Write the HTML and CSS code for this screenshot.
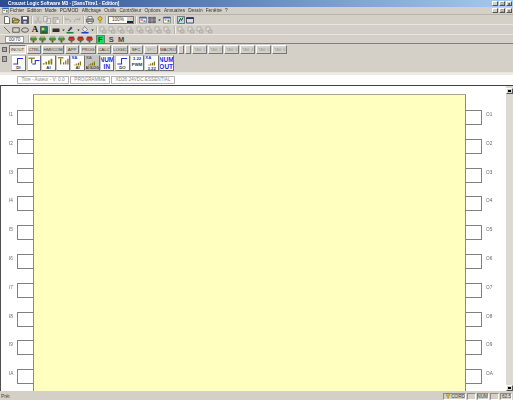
FILE: index.html
```html
<!DOCTYPE html>
<html lang="fr">
<head>
    <meta charset="UTF-8">
    <title>Crouzet Logic Software M3</title>
    <link rel="stylesheet" href="styles.css">
</head>
<body>
    <svg class="defs" width="0" height="0">
        <symbol id="i-new" viewBox="0 0 16 16"><path d="M3 1h7l3 3v11H3z" fill="#fff" stroke="#333" stroke-width="1.4"/></symbol>
        <symbol id="i-open" viewBox="0 0 16 16"><path d="M1 14V4h5l1 2h5v2" fill="#e8d060" stroke="#333" stroke-width="1.3"/><path d="M1 14l3-6h11l-3 6z" fill="#d8b840" stroke="#333" stroke-width="1.3"/></symbol>
        <symbol id="i-save" viewBox="0 0 16 16"><path d="M1 1h14v14H1z" fill="#505070" stroke="#222"/><path d="M4 2h8v5H4z" fill="#fff"/><path d="M5 10h6v5H5z" fill="#ccc"/></symbol>
        <symbol id="i-cut" viewBox="0 0 16 16"><path d="M5 1l5 9M11 1l-5 9" stroke="#a8a8a8" stroke-width="1.5" fill="none"/><circle cx="4" cy="12" r="2.4" fill="none" stroke="#a8a8a8" stroke-width="1.5"/><circle cx="12" cy="12" r="2.4" fill="none" stroke="#a8a8a8" stroke-width="1.5"/></symbol>
        <symbol id="i-copy" viewBox="0 0 16 16"><path d="M1 1h8v10H1zM7 5h8v10H7z" fill="#e4e2dc" stroke="#a0a0a0" stroke-width="1.4"/></symbol>
        <symbol id="i-paste" viewBox="0 0 16 16"><path d="M2 3h10v12H2z" fill="#c8c4b0" stroke="#a0a0a0" stroke-width="1.4"/><path d="M8 7h7v8H8z" fill="#eee" stroke="#a0a0a0"/></symbol>
        <symbol id="i-undo" viewBox="0 0 16 16"><path d="M13 12C13 6 8 5 4 7M2 3l1 5 5-1" fill="none" stroke="#a8a8a8" stroke-width="1.8"/></symbol>
        <symbol id="i-redo" viewBox="0 0 16 16"><path d="M3 12C3 6 8 5 12 7M14 3l-1 5-5-1" fill="none" stroke="#a8a8a8" stroke-width="1.8"/></symbol>
        <symbol id="i-print" viewBox="0 0 16 16"><path d="M4 1h8v5H4z" fill="#fff" stroke="#333"/><path d="M1 6h14v6H1z" fill="#a0a0a0" stroke="#333"/><path d="M4 11h8v4H4z" fill="#fff" stroke="#333"/></symbol>
        <symbol id="i-key" viewBox="0 0 16 16"><circle cx="8" cy="5" r="4" fill="#e8c820" stroke="#605010"/><path d="M7 8h2v7H7z" fill="#a89018"/><path d="M9 11h2v2H9z" fill="#a89018"/></symbol>
        <symbol id="i-win" viewBox="0 0 16 16"><path d="M1 2h14v12H1z" fill="#fff" stroke="#445"/><path d="M1 2h14v3H1z" fill="#3060b0"/><path d="M3 7h4v2H3z" fill="#d04030"/><path d="M9 7h4v5H9z" fill="#40a060"/></symbol>
        <symbol id="i-grid" viewBox="0 0 16 16"><path d="M1 2h6v5H1zM9 2h6v5H9zM1 9h6v5H1zM9 9h6v5H9z" fill="#707080" stroke="#333" stroke-width=".6"/></symbol>
        <symbol id="i-drop" viewBox="0 0 16 16"><path d="M4 6h8l-4 5z" fill="#222"/></symbol>
        <symbol id="i-map" viewBox="0 0 16 16"><path d="M1 2h14v12H1z" fill="#f4e8e4" stroke="#446"/><path d="M1 2h14v3H1z" fill="#4070b0"/><path d="M3 7h5v2H3z" fill="#d04040"/><path d="M9 9h4v3H9z" fill="#30a080"/></symbol>
        <symbol id="i-chart" viewBox="0 0 16 16"><path d="M1 1h14v14H1z" fill="#b8d8e0" stroke="#223"/><path d="M3 13l4-8 2 4 3-6" fill="none" stroke="#106030" stroke-width="2"/></symbol>
        <symbol id="i-panel" viewBox="0 0 16 16"><path d="M1 3h14v11H1z" fill="#dde" stroke="#222" stroke-width="1.4"/><path d="M1 3h14v3H1z" fill="#203070"/></symbol>
        <symbol id="i-line" viewBox="0 0 16 16"><path d="M2 2l12 12" stroke="#444" stroke-width="1.4"/></symbol>
        <symbol id="i-rect" viewBox="0 0 16 16"><path d="M1.500 3.500h13v9h-13z" fill="none" stroke="#333" stroke-width="1.4"/></symbol>
        <symbol id="i-oval" viewBox="0 0 16 16"><ellipse cx="8" cy="8" rx="7" ry="4.500" fill="none" stroke="#333" stroke-width="1.4"/></symbol>
        <symbol id="i-pic" viewBox="0 0 16 16"><path d="M1 1h14v14H1z" fill="#208070" stroke="#123"/><circle cx="6" cy="6" r="3" fill="#e8d040"/><path d="M2 14l5-5 3 3 2-2 3 4z" fill="#286028"/></symbol>
        <symbol id="i-fill" viewBox="0 0 16 16"><path d="M1 5h14v7H1z" fill="#303030"/></symbol>
        <symbol id="i-pen" viewBox="0 0 16 16"><path d="M10 1l3 3-7 7-3-1z" fill="#404060"/><path d="M1 12h14v3H1z" fill="#208040"/></symbol>
        <symbol id="i-bucket" viewBox="0 0 16 16"><path d="M7 1l6 6-5 5-5-5z" fill="#e8e8f0" stroke="#335"/><path d="M1 12h14v3H1z" fill="#2040c0"/></symbol>
        <symbol id="i-gray" viewBox="0 0 16 16"><path d="M2 2h8v8H2z" fill="#dedad2" stroke="#a8a49c" stroke-width="1.4"/><path d="M7 8h7v6H7z" fill="#cac6be" stroke="#a8a49c" stroke-width="1.400"/></symbol>
        <symbol id="i-chip" viewBox="0 0 16 16"><path d="M3 2h10v8H3z" fill="#e0d040" stroke="#605820"/><path d="M1 5h14v4H1z" fill="#30a040" stroke="#204020" stroke-width=".6"/><path d="M6 10h4v5H6z" fill="#306030"/></symbol>
        <symbol id="i-chip-r" viewBox="0 0 16 16"><path d="M3 2h10v8H3z" fill="#d02020" stroke="#501010"/><path d="M1 5h14v4H1z" fill="#e04030" stroke="#501010" stroke-width=".6"/><path d="M6 10h4v5H6z" fill="#307030"/></symbol>
        <symbol id="i-step" viewBox="0 0 28 20"><path d="M3 17h10V4h13" fill="none" stroke="#2030e0" stroke-width="2.400"/></symbol>
        <symbol id="i-filter" viewBox="0 0 28 20"><path d="M1 2h15v3H1z" fill="#807818"/><path d="M7 5h3v10H7z" fill="#807818"/><path d="M10 17h7V9h10" fill="none" stroke="#2030e0" stroke-width="2.400"/></symbol>
        <symbol id="i-ramp" viewBox="0 0 28 20"><path d="M2 15h4v3H2zM8 12h4v6H8zM14 9h4v9h-4zM20 5h4v13h-4z" fill="#857a10"/></symbol>
        <symbol id="i-ramp-f" viewBox="0 0 28 20"><path d="M2 1h13v3H2z" fill="#807818"/><path d="M7 4h3v14H7z" fill="#807818"/><path d="M14 13h3v5h-3zM19 9h3v9h-3zM24 5h3v13h-3z" fill="#857a10"/></symbol>
    </svg>

    <div class="titlebar">
        <span class="title-text">Crouzet Logic Software M3 - [SansTitre1 - Edition]</span>
        <div class="win-btns">
            <span class="win-btn">_</span><span class="win-btn">&#9633;</span><span class="win-btn">x</span>
        </div>
    </div>

    <div class="menubar">
        <svg class="menu-ico"><use href="#i-win"/></svg>
        <span class="menu-item">Fichier</span>
        <span class="menu-item">Edition</span>
        <span class="menu-item">Mode</span>
        <span class="menu-item">PC/MOD</span>
        <span class="menu-item">Affichage</span>
        <span class="menu-item">Outils</span>
        <span class="menu-item">Contrôleur</span>
        <span class="menu-item">Options</span>
        <span class="menu-item">Annuaires</span>
        <span class="menu-item">Dessin</span>
        <span class="menu-item">Fenêtre</span>
        <span class="menu-item">?</span>
        <div class="win-btns">
            <span class="win-btn">_</span><span class="win-btn">&#9633;</span><span class="win-btn">x</span>
        </div>
    </div>

    <div class="toolrow">
        <svg class="tool"><use href="#i-new"/></svg>
        <svg class="tool"><use href="#i-open"/></svg>
        <svg class="tool"><use href="#i-save"/></svg>
        <i class="sep"></i>
        <svg class="tool"><use href="#i-cut"/></svg>
        <svg class="tool"><use href="#i-copy"/></svg>
        <svg class="tool"><use href="#i-paste"/></svg>
        <i class="sep"></i>
        <svg class="tool"><use href="#i-undo"/></svg>
        <svg class="tool"><use href="#i-redo"/></svg>
        <i class="sep"></i>
        <svg class="tool"><use href="#i-print"/></svg>
        <i class="sep-small"></i>
        <svg class="tool"><use href="#i-key"/></svg>
        <i class="sep"></i>
        <div class="combo"><span>100%</span><b class="combo-arrow"></b></div>
        <i class="sep sep-wide"></i>
        <svg class="tool"><use href="#i-map"/></svg>
        <svg class="tool"><use href="#i-grid"/></svg>
        <svg class="tool tool-thin"><use href="#i-drop"/></svg>
        <svg class="tool"><use href="#i-win"/></svg>
        <i class="sep sep-wide"></i>
        <svg class="tool"><use href="#i-chart"/></svg>
        <svg class="tool"><use href="#i-panel"/></svg>
    </div>

    <div class="toolrow">
        <svg class="tool"><use href="#i-line"/></svg>
        <svg class="tool"><use href="#i-rect"/></svg>
        <svg class="tool"><use href="#i-oval"/></svg>
        <span class="tool-a">A</span>
        <svg class="tool"><use href="#i-pic"/></svg>
        <i class="sep"></i>
        <svg class="tool"><use href="#i-fill"/></svg>
        <svg class="tool tool-thin"><use href="#i-drop"/></svg>
        <svg class="tool"><use href="#i-pen"/></svg>
        <svg class="tool tool-thin"><use href="#i-drop"/></svg>
        <svg class="tool"><use href="#i-bucket"/></svg>
        <svg class="tool tool-thin"><use href="#i-drop"/></svg>
        <i class="sep"></i>
        <svg class="tool"><use href="#i-gray"/></svg>
        <svg class="tool"><use href="#i-gray"/></svg>
        <svg class="tool"><use href="#i-gray"/></svg>
        <svg class="tool"><use href="#i-gray"/></svg>
        <svg class="tool"><use href="#i-gray"/></svg>
        <svg class="tool"><use href="#i-gray"/></svg>
        <svg class="tool"><use href="#i-gray"/></svg>
        <svg class="tool"><use href="#i-gray"/></svg>
        <i class="sep sep-wide"></i>
        <svg class="tool"><use href="#i-gray"/></svg>
        <svg class="tool"><use href="#i-gray"/></svg>
        <svg class="tool"><use href="#i-gray"/></svg>
        <svg class="tool"><use href="#i-gray"/></svg>
    </div>

    <div class="toolrow toolrow-last">
        <span class="count-box">00/70</span>
        <i class="sep"></i>
        <svg class="tool tool-wide"><use href="#i-chip"/></svg>
        <svg class="tool tool-wide"><use href="#i-chip"/></svg>
        <svg class="tool tool-wide"><use href="#i-chip"/></svg>
        <svg class="tool tool-wide"><use href="#i-chip"/></svg>
        <svg class="tool tool-wide"><use href="#i-chip-r"/></svg>
        <svg class="tool tool-wide"><use href="#i-chip-r"/></svg>
        <svg class="tool tool-wide"><use href="#i-chip-r"/></svg>
        <span class="mode mode-on">F</span>
        <span class="mode">S</span>
        <span class="mode">M</span>
    </div>

    <div class="tabs">
        <i class="grip"></i>
        <span class="tab tab-on w17">INOUT</span>
        <span class="tab w14">CTRL</span>
        <span class="tab w22">HMI/COM</span>
        <span class="tab w14">APP</span>
        <span class="tab w16">PROG</span>
        <span class="tab w14">CALC</span>
        <span class="tab w16">LOGIC</span>
        <span class="tab w14">SFC</span>
        <span class="tab tab-off w14">SFC</span>
        <span class="tab w18">MACRO</span>
        <span class="tab w6"></span>
        <span class="tab w6"></span>
        <span class="tab tab-off w15">TAB 1</span>
        <span class="tab tab-off w15">TAB 2</span>
        <span class="tab tab-off w15">TAB 3</span>
        <span class="tab tab-off w15">TAB 4</span>
        <span class="tab tab-off w15">TAB 5</span>
        <span class="tab tab-off w15">TAB 6</span>
    </div>

    <div class="palette">
        <i class="grip grip-tall"></i>
        <div class="blocks">
            <div class="block"><svg class="block-ico"><use href="#i-step"/></svg><span>DI</span></div>
            <div class="block block-gap"><svg class="block-ico"><use href="#i-filter"/></svg><span></span></div>
            <div class="block"><svg class="block-ico"><use href="#i-ramp"/></svg><span>AI</span></div>
            <div class="block"><svg class="block-ico"><use href="#i-ramp-f"/></svg><span></span></div>
            <div class="block"><em>XA</em><svg class="block-ico block-ico-low"><use href="#i-ramp"/></svg><span>AI</span></div>
            <div class="block block-down"><em class="em-gray">XA</em><svg class="block-ico block-ico-low"><use href="#i-ramp"/></svg><span class="small-label">AI ILOG</span></div>
            <div class="block block-num">NUM<br>IN</div>
            <div class="block block-gap"><svg class="block-ico"><use href="#i-step"/></svg><span>DO</span></div>
            <div class="block"><em class="pwm">3.22</em><span class="block-tall">PWM</span></div>
            <div class="block"><em>XA</em><svg class="block-ico block-ico-low"><use href="#i-ramp"/></svg><em class="pwm">3.22</em></div>
            <div class="block block-num">NUM<br>OUT</div>
        </div>
    </div>

    <div class="docbar">
        <span class="doc-tab w52">Titre - Auteur - V: 0.0</span>
        <span class="doc-tab w40">PROGRAMME</span>
        <span class="doc-tab w64">XD26 24VDC ESSENTIAL</span>
    </div>

    <div class="workspace">
        <div class="sheet">
            <div class="pins">
                <div class="pin"><span class="pin-name">I1</span><i class="pin-box"></i></div>
                <div class="pin"><span class="pin-name">I2</span><i class="pin-box"></i></div>
                <div class="pin"><span class="pin-name">I3</span><i class="pin-box"></i></div>
                <div class="pin"><span class="pin-name">I4</span><i class="pin-box"></i></div>
                <div class="pin"><span class="pin-name">I5</span><i class="pin-box"></i></div>
                <div class="pin"><span class="pin-name">I6</span><i class="pin-box"></i></div>
                <div class="pin"><span class="pin-name">I7</span><i class="pin-box"></i></div>
                <div class="pin"><span class="pin-name">I8</span><i class="pin-box"></i></div>
                <div class="pin"><span class="pin-name">I9</span><i class="pin-box"></i></div>
                <div class="pin"><span class="pin-name">IA</span><i class="pin-box"></i></div>
            </div>
            <div class="canvas"></div>
            <div class="pins pins-right">
                <div class="pin"><i class="pin-box"></i><span class="pin-name">O1</span></div>
                <div class="pin"><i class="pin-box"></i><span class="pin-name">O2</span></div>
                <div class="pin"><i class="pin-box"></i><span class="pin-name">O3</span></div>
                <div class="pin"><i class="pin-box"></i><span class="pin-name">O4</span></div>
                <div class="pin"><i class="pin-box"></i><span class="pin-name">O5</span></div>
                <div class="pin"><i class="pin-box"></i><span class="pin-name">O6</span></div>
                <div class="pin"><i class="pin-box"></i><span class="pin-name">O7</span></div>
                <div class="pin"><i class="pin-box"></i><span class="pin-name">O8</span></div>
                <div class="pin"><i class="pin-box"></i><span class="pin-name">O9</span></div>
                <div class="pin"><i class="pin-box"></i><span class="pin-name">OA</span></div>
            </div>
        </div>
        <div class="scrollbar">
            <span class="scroll-btn scroll-up"></span>
            <span class="scroll-btn scroll-down"></span>
        </div>
    </div>

    <div class="statusbar">
        <span class="status-text">Prêt</span>
        <span class="panel w23"><svg class="status-ico"><use href="#i-key"/></svg>CORD</span>
        <span class="panel w9"></span>
        <span class="panel w12">NUM</span>
        <span class="panel w9"></span>
        <span class="panel w12">62.5</span>
    </div>
</body>
</html>
```

FILE: styles.css
```css
* {
    margin: 0;
    padding: 0;
    box-sizing: border-box;
    font-family: "Liberation Sans", Arial, sans-serif;
}

body {
    width: 513px;
    height: 400px;
    overflow: hidden;
    background: #d4d0c8;
    display: flex;
    flex-direction: column;
    font-size: 4.7px;
    color: #444;
}

.defs {
    position: absolute;
}

.titlebar {
    height: 7px;
    flex: none;
    display: flex;
    align-items: center;
    padding-left: 8px;
    background: linear-gradient(to right, #2b4c93, #a6caf0);
    color: #fff;
    font-weight: bold;
}

.title-text {
    line-height: 7px;
    filter: blur(0.2px);
}

.win-btns {
    margin-left: auto;
    margin-right: 1px;
    display: flex;
    gap: 1px;
}

.win-btn {
    width: 6px;
    height: 5px;
    background: #d4d0c8;
    border: 1px solid;
    border-color: #fff #555 #555 #fff;
    font-size: 4px;
    line-height: 3px;
    text-align: center;
    color: #000;
    overflow: hidden;
}

.menubar {
    height: 8px;
    flex: none;
    display: flex;
    align-items: center;
    padding-left: 2px;
    border-bottom: 1px solid #b8b4ac;
    color: #333;
}

.menu-ico {
    width: 7px;
    height: 7px;
    margin-right: 1px;
}

.menu-item {
    margin-right: 3.200px;
    line-height: 7px;
    white-space: nowrap;
    filter: blur(0.2px);
}

.toolrow {
    height: 10px;
    flex: none;
    display: flex;
    align-items: center;
    padding-left: 3px;
    border-bottom: 1px solid #e8e6e0;
}

.toolrow-last {
    height: 9px;
    border-bottom: 1px solid #808080;
}

.tool {
    width: 8px;
    height: 8px;
    margin-right: 1.2px;
    flex: none;
    filter: blur(0.25px);
}

.tool-thin {
    width: 5px;
    margin-right: 0.5px;
}

.tool-wide {
    width: 7px;
    height: 7px;
    margin-right: 2.4px;
}

.tool-a {
    width: 9px;
    text-align: center;
    font-family: "Liberation Serif", serif;
    font-weight: bold;
    font-size: 9px;
    line-height: 9px;
    color: #111;
}

.sep {
    width: 2px;
    height: 8px;
    margin: 0 0.5px;
    background: #b8b4ac;
    border-right: 1px solid #f0eeea;
    flex: none;
}

.sep-wide {
    margin: 0 1.500px;
}

.sep-small {
    width: 1px;
    height: 8px;
}

.combo {
    width: 26px;
    height: 8px;
    display: flex;
    align-items: center;
    padding-left: 3px;
    background: #fff;
    border: 1px solid #777;
    flex: none;
    color: #333;
}

.combo-arrow {
    width: 6px;
    height: 6px;
    margin-left: auto;
    background: #d4d0c8;
    border-bottom: 2px solid #222;
}

.count-box {
    width: 19px;
    height: 7px;
    margin-left: 2px;
    margin-right: 3px;
    background: #fff;
    border: 1px solid #999;
    line-height: 5px;
    text-align: center;
    color: #333;
}

.mode {
    width: 9px;
    height: 9px;
    margin-right: 1px;
    font-size: 7.500px;
    font-weight: bold;
    line-height: 9px;
    text-align: center;
    color: #444;
}

.mode-on {
    margin-right: 2px;
    background: #18e060;
    color: #052;
    border: 1px solid #777;
    line-height: 7px;
}

.tabs {
    height: 10px;
    flex: none;
    display: flex;
    align-items: flex-end;
    padding-left: 2px;
}

.grip {
    width: 5px;
    height: 5px;
    margin-right: 2px;
    align-self: center;
    background: #aaa;
    border: 1px solid #666;
    flex: none;
}

.grip-tall {
    height: 6px;
    align-self: flex-start;
    margin-top: 1px;
}

.tab {
    height: 9px;
    margin-right: 1px;
    background: #d4d0c8;
    border: 1px solid;
    border-color: #fff #777 #777 #fff;
    font-size: 4.300px;
    line-height: 7px;
    text-align: center;
    color: #333;
    flex: none;
    white-space: nowrap;
    overflow: hidden;
}

.tab-on {
    border-color: #777 #fff #fff #777;
    background: #e6e3dc;
}

.tab-off {
    color: #a0a0a0;
}

.w6 { width: 6px; }
.w9 { width: 9px; }
.w12 { width: 12px; }
.w14 { width: 14px; }
.w15 { width: 15px; }
.w16 { width: 16px; }
.w17 { width: 17px; }
.w18 { width: 18px; }
.w22 { width: 22px; }
.w23 { width: 23px; }
.w40 { width: 40px; }
.w52 { width: 52px; }
.w64 { width: 64px; }

.palette {
    height: 19px;
    flex: none;
    display: flex;
    padding: 1px 0 0 2px;
    border-bottom: 1px solid #e8e6e0;
}

.blocks {
    display: flex;
    margin-left: 2px;
}

.block {
    width: 14.600px;
    height: 16px;
    display: flex;
    flex-direction: column;
    align-items: center;
    background: #fff;
    border: 1px solid;
    border-color: #c8c8c8 #707070 #707070 #c8c8c8;
    font-size: 4.300px;
    font-weight: bold;
    line-height: 4px;
    color: #333;
    overflow: hidden;
}

.block-gap {
    margin-left: 1px;
}

.block-down {
    background: #c4c4c0;
}

.block-ico {
    width: 12px;
    height: 10px;
    flex: none;
    filter: blur(0.2px);
}

.block-ico-low {
    height: 6px;
}

.block em {
    align-self: flex-start;
    font-style: normal;
    color: #2030e0;
    line-height: 4px;
}

.block em.em-gray {
    color: #666;
}

.block em.pwm {
    align-self: center;
    margin-top: 1px;
}

.small-label {
    font-size: 3.600px;
    white-space: nowrap;
}

.block-tall {
    margin-top: 2px;
}

.block-num {
    font-size: 6.500px;
    line-height: 7px;
    text-align: center;
    color: #1c2ce0;
}

.docbar {
    height: 12px;
    flex: none;
    display: flex;
    align-items: center;
    gap: 1px;
    padding-left: 17px;
    background: #fff;
    border-top: 2px solid #ecebe6;
}

.doc-tab {
    height: 8px;
    border: 1px solid #b4b4b4;
    line-height: 6px;
    text-align: center;
    color: #888;
    white-space: nowrap;
}

.workspace {
    flex: 1;
    min-height: 0;
    display: flex;
    background: #fff;
    border-top: 1px solid #404040;
    border-left: 1px solid #505050;
}

.sheet {
    flex: 1;
    display: flex;
    padding-top: 8px;
    overflow: hidden;
}

.pins {
    width: 32px;
    flex: none;
    padding-top: 16px;
}

.pins-right {
    width: 40px;
}

.pin {
    height: 28.800px;
    display: flex;
    align-items: flex-start;
    color: #666;
}

.pin-name {
    width: 16px;
    padding: 2px 0 0 8px;
    line-height: 5px;
    filter: blur(0.15px);
}

.pins-right .pin-name {
    width: 24px;
    padding-left: 4px;
}

.pin-box {
    width: 16px;
    height: 15px;
    background: #fff;
    border: 1px solid #808080;
    border-right: none;
}

.pins-right .pin-box {
    border-right: 1px solid #808080;
    border-left: none;
}

.canvas {
    flex: 1;
    background: #ffffc0;
    border-top: 1px solid #a8a890;
    border-left: 1px solid #8c8c78;
    border-right: 1px solid #8c8c78;
}

.scrollbar {
    width: 7px;
    flex: none;
    display: flex;
    flex-direction: column;
    justify-content: space-between;
    padding-top: 2px;
    background: #dcd9d2;
}

.scroll-btn {
    height: 6px;
    background: #d4d0c8;
    border: 1px solid;
    border-color: #fff #555 #555 #fff;
    position: relative;
}

.scroll-btn::after {
    content: "";
    position: absolute;
    left: 1px;
    top: 1px;
    width: 3px;
    height: 2px;
    background: #000;
}

.statusbar {
    height: 9px;
    flex: none;
    display: flex;
    align-items: center;
    gap: 1px;
    padding: 1px 1px 0;
    color: #444;
}

.status-text {
    margin-right: auto;
}

.panel {
    height: 7px;
    border: 1px solid;
    border-color: #908c84 #fff #fff #908c84;
    line-height: 5px;
    text-align: right;
    display: flex;
    align-items: center;
    justify-content: flex-end;
}

.status-ico {
    width: 6px;
    height: 6px;
}
```
